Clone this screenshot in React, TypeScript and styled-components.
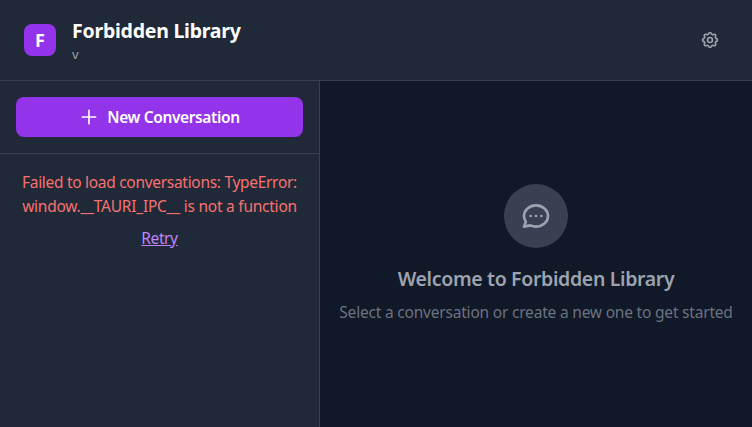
import React from 'react';
import styled, { createGlobalStyle } from 'styled-components';

const GlobalStyle = createGlobalStyle`
  *, *::before, *::after { box-sizing: border-box; }
  body {
    margin: 0;
    background: #111827;
    font-family: "Segoe UI", "Noto Sans", "Open Sans", sans-serif;
    overflow: hidden;
  }
  h1, h2, p { margin: 0; }
  button { font-family: inherit; cursor: pointer; border: 0; }
`;

const Shell = styled.div`
  display: flex;
  flex-direction: column;
  height: 100vh;
  background: #111827;
`;

const Header = styled.header`
  display: flex;
  align-items: center;
  justify-content: space-between;
  flex: none;
  height: 81px;
  padding: 0 24px;
  background: #1f2937;
  border-bottom: 1px solid #374151;
`;

const Brand = styled.div`
  display: flex;
  align-items: center;
  gap: 16px;
`;

const Logo = styled.div`
  display: flex;
  align-items: center;
  justify-content: center;
  width: 32px;
  height: 32px;
  border-radius: 8px;
  background: #9333ea;
  color: #fff;
  font-size: 18px;
  font-weight: 700;
  line-height: 28px;
`;

const AppName = styled.h1`
  padding-top: 1px;
  color: #fff;
  font-size: 19.5px;
  font-weight: 700;
  line-height: 27px;
  letter-spacing: -0.24px;
`;

const Version = styled.p`
  color: #9ca3af;
  font-size: 13px;
  line-height: 20px;
`;

const SettingsButton = styled.button`
  display: flex;
  padding: 8px;
  background: transparent;
  color: #9ca3af;
`;

const Body = styled.div`
  display: flex;
  flex: 1;
  min-height: 0;
`;

const Sidebar = styled.aside`
  width: 320px;
  flex: none;
  background: #1f2937;
  border-right: 1px solid #374151;
`;

const SidebarTop = styled.div`
  padding: 16px;
  border-bottom: 1px solid #374151;
`;

const NewButton = styled.button`
  display: flex;
  align-items: center;
  justify-content: center;
  gap: 8px;
  width: 100%;
  height: 40px;
  border-radius: 8px;
  background: #9333ea;
  color: #fff;
  font-size: 15.5px;
  font-weight: 600;
  line-height: 24px;
  letter-spacing: -0.38px;
`;

const ErrorPanel = styled.div`
  padding: 16px 0;
  text-align: center;
  font-size: 15.5px;
  line-height: 24px;
`;

const ErrorText = styled.p`
  color: #f87171;
`;

const ErrorLine = styled.span<{ $spacing: number }>`
  display: block;
  white-space: nowrap;
  letter-spacing: ${({ $spacing }) => $spacing}px;
`;

const Retry = styled.button`
  margin-top: 8px;
  padding: 0;
  background: transparent;
  color: #c084fc;
  font-size: 15.5px;
  line-height: 24px;
  letter-spacing: -0.4px;
  text-decoration: underline;
`;

const Main = styled.main`
  display: flex;
  flex: 1;
  flex-direction: column;
  align-items: center;
  justify-content: center;
  min-width: 0;
  white-space: nowrap;
`;

const ChatBadge = styled.div`
  display: flex;
  align-items: center;
  justify-content: center;
  width: 64px;
  height: 64px;
  margin-bottom: 16px;
  border-radius: 50%;
  background: #374151;
  color: #9ca3af;
`;

const WelcomeTitle = styled.h2`
  margin-bottom: 8px;
  padding-top: 1px;
  color: #9ca3af;
  font-size: 19.5px;
  font-weight: 600;
  line-height: 27px;
  letter-spacing: -0.34px;
`;

const WelcomeText = styled.p`
  color: #6b7280;
  font-size: 15.5px;
  line-height: 24px;
  letter-spacing: -0.2px;
`;

function Icon({ size, paths }: { size: number; paths: string[] }) {
  return (
    <svg width={size} height={size} viewBox="0 0 24 24" fill="none" stroke="currentColor"
      strokeWidth={2} strokeLinecap="round" strokeLinejoin="round" aria-hidden="true">
      {paths.map((d) => <path key={d} d={d} />)}
    </svg>
  );
}

const COG = [
  'M10.325 4.317c.426-1.756 2.924-1.756 3.35 0a1.724 1.724 0 002.573 1.066c1.543-.94 3.31.826 2.37 2.37a1.724 1.724 0 001.065 2.572c1.756.426 1.756 2.924 0 3.35a1.724 1.724 0 00-1.066 2.573c.94 1.543-.826 3.31-2.37 2.37a1.724 1.724 0 00-2.572 1.065c-.426 1.756-2.924 1.756-3.35 0a1.724 1.724 0 00-2.573-1.066c-1.543.94-3.31-.826-2.37-2.37a1.724 1.724 0 00-1.065-2.572c-1.756-.426-1.756-2.924 0-3.35a1.724 1.724 0 001.066-2.573c-.94-1.543.826-3.31 2.37-2.37.996.608 2.296.07 2.572-1.065z',
  'M15 12a3 3 0 11-6 0 3 3 0 016 0z',
];
const PLUS = ['M12 4v16m8-8H4'];
const CHAT = [
  'M8 12h.01M12 12h.01M16 12h.01M21 12c0 4.418-4.03 8-9 8a9.863 9.863 0 01-4.255-.949L3 20l1.395-3.72C3.512 15.042 3 13.574 3 12c0-4.418 4.03-8 9-8s9 3.582 9 8z',
];

export default function App() {
  return (
    <>
      <GlobalStyle />
      <Shell>
        <Header>
          <Brand>
            <Logo>F</Logo>
            <div>
              <AppName>Forbidden Library</AppName>
              <Version>v</Version>
            </div>
          </Brand>
          <SettingsButton aria-label="Settings">
            <Icon size={20} paths={COG} />
          </SettingsButton>
        </Header>
        <Body>
          <Sidebar>
            <SidebarTop>
              <NewButton>
                <Icon size={20} paths={PLUS} />
                <span>New Conversation</span>
              </NewButton>
            </SidebarTop>
            <ErrorPanel>
              <ErrorText>
                <ErrorLine $spacing={-0.3}>Failed to load conversations: TypeError:</ErrorLine>
                <ErrorLine $spacing={-0.24}>window.__TAURI_IPC__ is not a function</ErrorLine>
              </ErrorText>
              <Retry>Retry</Retry>
            </ErrorPanel>
          </Sidebar>
          <Main>
            <ChatBadge>
              <Icon size={32} paths={CHAT} />
            </ChatBadge>
            <WelcomeTitle>Welcome to Forbidden Library</WelcomeTitle>
            <WelcomeText>Select a conversation or create a new one to get started</WelcomeText>
          </Main>
        </Body>
      </Shell>
    </>
  );
}
